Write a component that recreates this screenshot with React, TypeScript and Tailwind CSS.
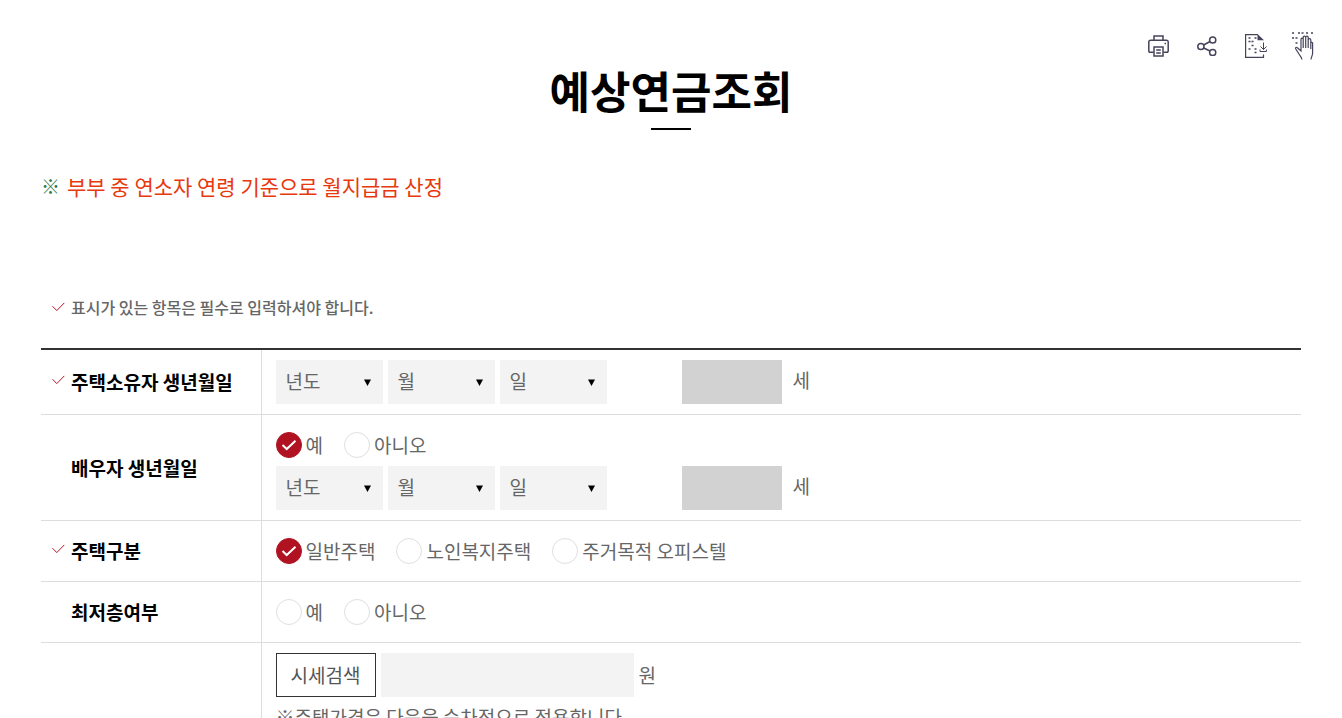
import { useState } from 'react';

const BIRTH_PARTS = ['년도', '월', '일'];

function RequiredMark() {
  return (
    <svg width="13" height="10" viewBox="0 0 13 10" fill="none" stroke="#b01224" className="shrink-0" aria-hidden="true">
      <path d="M.5 4.2 4.8 8.600 12.300.9" />
    </svg>
  );
}

function PrintIcon() {
  return (
    <svg width="25" height="22" viewBox="0 0 25 22" fill="none" stroke="#45435a" strokeWidth="1.5" aria-hidden="true">
      <path d="M6 5.500V1h9v4.500M5.500 17.200H2A1.200 1.200 0 0 1 .8 16V7a1.700 1.700 0 0 1 1.700-1.700h16A1.700 1.700 0 0 1 20.200 7v9a1.200 1.200 0 0 1-1.200 1.200h-3.500" />
      <path d="M6 12h9v9H6zM8.200 15h4.600M8.200 18h4.600M16.500 8.500H18" />
    </svg>
  );
}

function ShareIcon() {
  return (
    <svg width="24" height="20" viewBox="0 0 24 20" fill="none" stroke="#45435a" strokeWidth="1.5" aria-hidden="true">
      <circle cx="3.900" cy="10.500" r="3.100" />
      <circle cx="15.700" cy="4" r="3.100" />
      <circle cx="15.700" cy="16.500" r="3.100" />
      <path d="m6.700 9 6.300-3.500M6.700 12l6.300 3" />
    </svg>
  );
}

function BrailleFileIcon() {
  return (
    <svg width="22" height="24" viewBox="0 0 22 24" fill="none" stroke="#45435a" aria-hidden="true">
      <path d="M13 .6H.6v22.800h17.900v-3" strokeWidth="1.2" />
      <path d="M12.500 0 19 6.200h-6.500z" fill="#45435a" stroke="none" />
      <path d="M18.500 8.500v7M15.500 12.500l3 3 3-3M15 15.500v2h6.400v-2" />
      <path d="M3.500 4h2M9.500 4h2M3.500 7.500h2M6.500 7.500h2M6.500 11.500h2M3.500 15h2M9.500 15h2M9.500 18.500h2" strokeWidth="1.5" />
    </svg>
  );
}

function BrailleHandIcon() {
  return (
    <svg width="24" height="28" viewBox="0 0 24 28" fill="none" stroke="#45435a" aria-hidden="true">
      <path d="M1 1h2M7 1h2M10.500 1h2M15 1h2M20 1h2M1 6h2M4.500 6h2M4.500 11h2" strokeWidth="1.6" />
      <path
        strokeWidth="1.2"
        d="M11 27.500c-.3-2-1.500-3-2.700-5L4.800 17c-.8-1.500.5-2.300 1.600-1.200L10 19V7.300a1 1 0 0 1 2.200 0V16V5.300a1.200 1.200 0 0 1 2.500 0V16V5.300a1.200 1.200 0 0 1 2.500 0V16V8a1.200 1.200 0 0 1 2.600 0V17V11a1 1 0 0 1 1.800 0V21c0 3-1.500 4-1.600 6.500"
      />
    </svg>
  );
}

const TOOLS = [
  { label: '인쇄', Icon: PrintIcon },
  { label: '공유', Icon: ShareIcon },
  { label: '점자파일 다운로드', Icon: BrailleFileIcon },
  { label: '점자 보기', Icon: BrailleHandIcon },
];

function BirthFields({ owner }: { owner: string }) {
  return (
    <div className="flex items-center gap-[5px]">
      {BIRTH_PARTS.map(part => (
        <div key={part} className="grid items-center bg-[#f3f3f3] w-[107px] h-11">
          <select aria-label={`${owner} ${part}`} className="col-start-1 row-start-1 appearance-none w-full h-11 pl-2.5 pb-0.5">
            <option>{part}</option>
          </select>
          <svg width="7" height="7" viewBox="0 0 7 7" className="col-start-1 row-start-1 justify-self-end mr-3 pointer-events-none" aria-hidden="true">
            <path d="M0 .5h7L3.500 7z" fill="#000" />
          </svg>
        </div>
      ))}
      <label className="flex items-center gap-[11px] ml-[70px]">
        <input type="text" readOnly className="w-[100px] h-11 bg-[#d2d2d2]" />
        <span className="pb-1">세</span>
      </label>
    </div>
  );
}

function RadioGroup({ name, options, initial }: { name: string; options: string[]; initial?: string }) {
  const [value, setValue] = useState(initial);
  return (
    <div className="flex flex-wrap gap-x-[21px]">
      {options.map(option => (
        <label key={option} className="flex items-center gap-1 h-[26px]">
          <span className="grid">
            <input
              type="radio"
              name={name}
              checked={value === option}
              onChange={() => setValue(option)}
              className="col-start-1 row-start-1 appearance-none size-[26px] rounded-full border border-[#dfdfdf] bg-white checked:border-[#b01222] checked:bg-[#b01222]"
            />
            {value === option && (
              <svg width="26" height="26" viewBox="0 0 26 26" fill="none" stroke="#fff" strokeWidth="2" className="col-start-1 row-start-1 pointer-events-none" aria-hidden="true">
                <path d="m6.500 13 4.200 4 8.800-8.300" />
              </svg>
            )}
          </span>
          {option}
        </label>
      ))}
    </div>
  );
}

function Row({ label, required, children }: { label?: string; required?: boolean; children: React.ReactNode }) {
  return (
    <tr className="border-b border-[#dddddd]">
      <th scope="row" className="border-r border-[#dddddd] pl-[11px] text-left font-bold text-black">
        <span className="flex items-center gap-1.5">
          <span className="w-[13px] pb-1">{required && <RequiredMark />}</span>
          {label}
        </span>
      </th>
      <td className="px-3.5 py-2.5">{children}</td>
    </tr>
  );
}

export default function App() {
  return (
    <div className="h-screen overflow-hidden bg-white font-['Noto_Sans_CJK_KR',sans-serif] text-[19px] leading-7 text-[#666666]">
      <div className="flex items-center justify-end gap-6 pt-8 pr-[27px] h-[60px]">
        {TOOLS.map(({ label, Icon }) => (
          <button key={label} type="button" aria-label={label}>
            <Icon />
          </button>
        ))}
      </div>

      <main className="px-[41px]">
        <h1 className="flex flex-col items-center text-[44px] leading-[60px] font-bold text-black">
          예상연금조회
          <span className="w-10 h-0.5 mt-2 bg-black" />
        </h1>

        <p className="flex items-center gap-[7px] mt-[42px] text-[21px] leading-7 text-[#e8380d]">
          <span className="text-[19px] font-light text-[#2f7a4a]">※</span>
          부부 중 연소자 연령 기준으로 월지급금 산정
        </p>

        <p className="flex items-center gap-1.5 mt-[95px] pl-[11px] text-base leading-6 font-medium">
          <RequiredMark />
          표시가 있는 항목은 필수로 입력하셔야 합니다.
        </p>

        <table className="w-full mt-[29px] table-fixed border-collapse">
          <colgroup>
            <col className="w-[220px]" />
            <col />
          </colgroup>
          <tbody className="border-t-2 border-[#333333]">
            <Row label="주택소유자 생년월일" required>
              <BirthFields owner="주택소유자" />
            </Row>
            <Row label="배우자 생년월일">
              <div className="pt-[7px] pb-2">
                <RadioGroup name="spouse" options={['예', '아니오']} initial="예" />
              </div>
              <BirthFields owner="배우자" />
            </Row>
            <Row label="주택구분" required>
              <div className="py-[7px]">
                <RadioGroup name="houseType" options={['일반주택', '노인복지주택', '주거목적 오피스텔']} initial="일반주택" />
              </div>
            </Row>
            <Row label="최저층여부">
              <div className="py-[7px]">
                <RadioGroup name="lowestFloor" options={['예', '아니오']} />
              </div>
            </Row>
            <Row>
              <div className="flex items-center gap-[5px]">
                <button type="button" className="w-[100px] h-11 border border-[#333333] text-[#555555]">시세검색</button>
                <label className="flex items-center gap-[5px]">
                  <input type="text" className="w-[253px] h-11 bg-[#f3f3f3]" />
                  원
                </label>
              </div>
              <p className="flex mt-1.5">
                <span className="font-light">※</span>
                주택가격은 다음을 순차적으로 적용합니다.
              </p>
            </Row>
          </tbody>
        </table>
      </main>
    </div>
  );
}
